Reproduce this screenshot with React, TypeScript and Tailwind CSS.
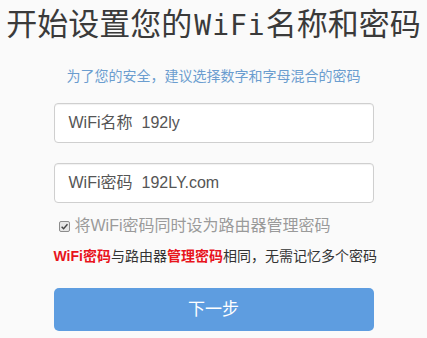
import React from 'react';

const cjk = '"Liberation Sans", "Noto Sans CJK SC", sans-serif';

const Field: React.FC<{ label: string; value: string }> = ({ label, value }) => (
  <div className="flex h-[40px] w-full items-center rounded-[4px] border border-[#cfcfcf] bg-white pl-[14px] text-[16px] text-[#555] shadow-[inset_0_1px_1px_rgba(0,0,0,0.06)]">
    <span>{label}</span>
    <span className="ml-[9px]">{value}</span>
  </div>
);

export default function App() {
  return (
    <div
      className="h-[338px] w-[427px] overflow-hidden bg-[#fafafa]"
      style={{ fontFamily: cjk }}
    >
      {/* title */}
      <h1
        className="h-[44px] whitespace-nowrap text-center text-[31px] leading-[44px] text-[#3a3a3a]"
        style={{ fontFamily: '"Noto Sans CJK SC", sans-serif' }}
      >
        开始设置您的
        <span className="pl-[2px] text-[28px] tracking-[1px]" style={{ fontFamily: '"DejaVu Sans Mono", monospace' }}>WiFi</span>
        名称和密码
      </h1>

      <p className="mt-[22px] text-center text-[14px] leading-[20px] text-[#6b9dcf]">
        为了您的安全，建议选择数字和字母混合的密码
      </p>

      <div className="mx-auto w-[320px]">
        <div className="mt-[17px]">
          <Field label="WiFi名称" value="192ly" />
        </div>
        <div className="mt-[20px]">
          <Field label="WiFi密码" value="192LY.com" />
        </div>

        <label className="mt-[13px] flex h-[20px] items-center pl-[5px] text-[16px] text-[#9a9a9a]">
          <span className="mr-[5px] flex h-[11px] w-[11px] items-center justify-center rounded-[2px] border border-[#8c8c8c] bg-[#e6e6e6]">
            <svg viewBox="0 0 10 10" className="h-[9px] w-[9px]">
              <path d="M1.8 5.2 L4 7.4 L8.3 2.6" fill="none" stroke="#444" strokeWidth="1.6" />
            </svg>
          </span>
          将WiFi密码同时设为路由器管理密码
        </label>

        <p className="mt-[10px] whitespace-nowrap text-center text-[14px] leading-[20px] text-[#333]">
          <span className="font-bold text-[#e8141c]">WiFi密码</span>与路由器
          <span className="font-bold text-[#e8141c]">管理密码</span>相同，无需记忆多个密码
        </p>

        <button className="mt-[22px] flex h-[43px] w-full items-center justify-center rounded-[5px] bg-[#5e9de0] text-[17px] text-white">
          下一步
        </button>
      </div>
    </div>
  );
}
